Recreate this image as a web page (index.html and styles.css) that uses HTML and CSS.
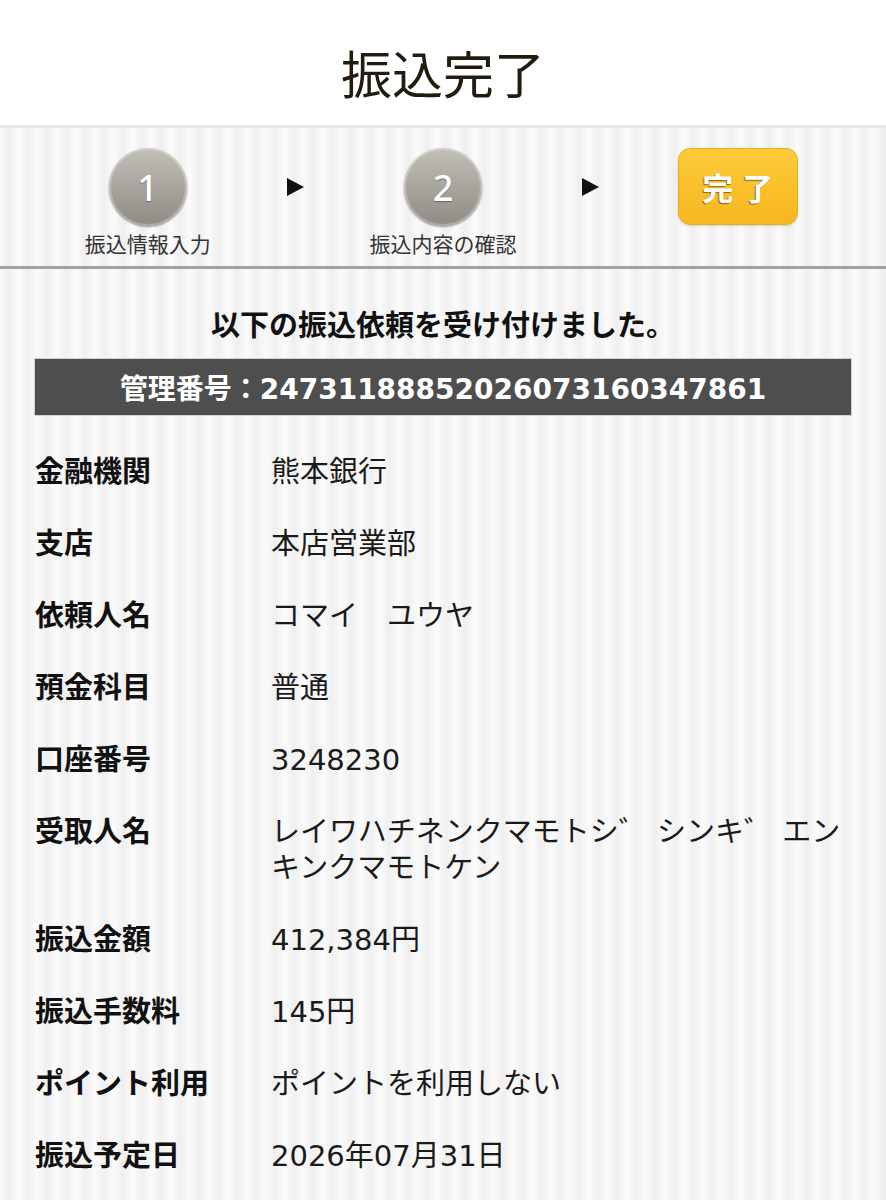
FILE: index.html
```html
<!DOCTYPE html>
<html lang="ja">
<head>
<meta charset="utf-8">
<title>振込完了</title>
<link rel="stylesheet" href="styles.css">
</head>
<body>
<header class="page-header">
  <h1 class="page-title">振込完了</h1>
</header>
<nav class="steps">
  <div class="step">
    <div class="step-circle">1</div>
    <div class="step-label">振込情報入力</div>
  </div>
  <div class="step-arrow"><span class="tri"></span></div>
  <div class="step">
    <div class="step-circle">2</div>
    <div class="step-label">振込内容の確認</div>
  </div>
  <div class="step-arrow"><span class="tri"></span></div>
  <div class="step">
    <div class="step-done">完 了</div>
  </div>
</nav>
<main class="content">
  <p class="notice">以下の振込依頼を受け付けました。</p>
  <div class="ref-bar">管理番号：24731188852026073160347861</div>
  <dl class="details">
    <div class="row"><dt>金融機関</dt><dd>熊本銀行</dd></div>
    <div class="row"><dt>支店</dt><dd>本店営業部</dd></div>
    <div class="row"><dt>依頼人名</dt><dd>コマイ　ユウヤ</dd></div>
    <div class="row"><dt>預金科目</dt><dd>普通</dd></div>
    <div class="row"><dt>口座番号</dt><dd>3248230</dd></div>
    <div class="row"><dt>受取人名</dt><dd>レイワハチネンクマモトシ゛ シンキ゛ エンキンクマモトケン</dd></div>
    <div class="row"><dt>振込金額</dt><dd>412,384円</dd></div>
    <div class="row"><dt>振込手数料</dt><dd>145円</dd></div>
    <div class="row"><dt>ポイント利用</dt><dd>ポイントを利用しない</dd></div>
    <div class="row"><dt>振込予定日</dt><dd>2026年07月31日</dd></div>
  </dl>
</main>
</body>
</html>
```
FILE: styles.css
```css
html, body {
  margin: 0;
  padding: 0;
}
body {
  font-family: "Noto Sans CJK JP", "Noto Sans", sans-serif;
  color: #111;
  background: repeating-linear-gradient(90deg, #fbfbfb 0px, #efefef 9px, #fbfbfb 19px);
}
.page-header {
  background: #fff;
  height: 125px;
  border-bottom: 3px solid #e8e8e8;
  display: flex;
  align-items: center;
  justify-content: center;
}
.page-title {
  margin: 0;
  font-size: 51px;
  font-weight: 400;
  color: #241b10;
  line-height: 1;
  padding-top: 20px;
}
.steps {
  display: grid;
  grid-template-columns: 1fr 0 1fr 0 1fr;
  padding-top: 20px;
  height: 118px;
  border-bottom: 3px solid #a2a2a2;
}
.step {
  display: flex;
  flex-direction: column;
  align-items: center;
}
.step-circle {
  width: 78px;
  height: 78px;
  border-radius: 50%;
  background: linear-gradient(#c2bfb8, #8f8b84);
  box-shadow: inset 0 0 0 2px rgba(255,255,255,0.25), 0 1px 2px rgba(0,0,0,0.45);
  color: #fff;
  font-family: "Noto Sans", sans-serif;
  font-size: 36px;
  font-weight: 500;
  display: flex;
  align-items: center;
  justify-content: center;
  text-shadow: 0 1px 1px rgba(0,0,0,0.35);
}
.step-label {
  margin-top: 2px;
  font-size: 21px;
  line-height: 30px;
  color: #333;
}
.step-arrow {
  display: flex;
  justify-content: center;
  padding-top: 30px;
  height: 18px;
}
.tri {
  display: block;
  width: 0;
  height: 0;
  border-left: 17px solid #111;
  border-top: 9px solid transparent;
  border-bottom: 9px solid transparent;
  flex: none;
}
.step-done {
  width: 118px;
  height: 75px;
  border-radius: 12px;
  border: 1px solid #e7ad1a;
  background: linear-gradient(#fcca3a, #f6b71f);
  box-shadow: 0 1px 2px rgba(0,0,0,0.15);
  display: flex;
  align-items: center;
  justify-content: center;
  color: #fff;
  font-size: 31px;
  font-weight: 700;
  letter-spacing: 1px;
  text-shadow: -1px 1px 1px rgba(90,70,10,0.7);
}
.content {
  padding-top: 34px;
}
.notice {
  margin: 0;
  text-align: center;
  font-size: 29px;
  font-weight: 700;
  line-height: 40px;
  color: #111;
}
.ref-bar {
  margin: 15px 34px 0;
  height: 56px;
  background: #4e4e4e;
  border: 1px solid #d0d0d0;
  color: #fff;
  font-family: "DejaVu Sans", "Noto Sans CJK JP", sans-serif;
  font-size: 28px;
  font-weight: 700;
  display: flex;
  align-items: center;
  justify-content: center;
}
.details {
  margin: 20px 0 0;
  padding: 0 35px;
}
.row {
  display: grid;
  grid-template-columns: 236px 1fr;
  padding: 18px 0;
  font-family: "DejaVu Sans", "Noto Sans CJK JP", sans-serif;
  font-size: 29px;
  line-height: 36px;
}
.row dt {
  font-weight: 700;
  color: #111;
}
.row dd {
  margin: 0;
  color: #1a1a1a;
}
```
